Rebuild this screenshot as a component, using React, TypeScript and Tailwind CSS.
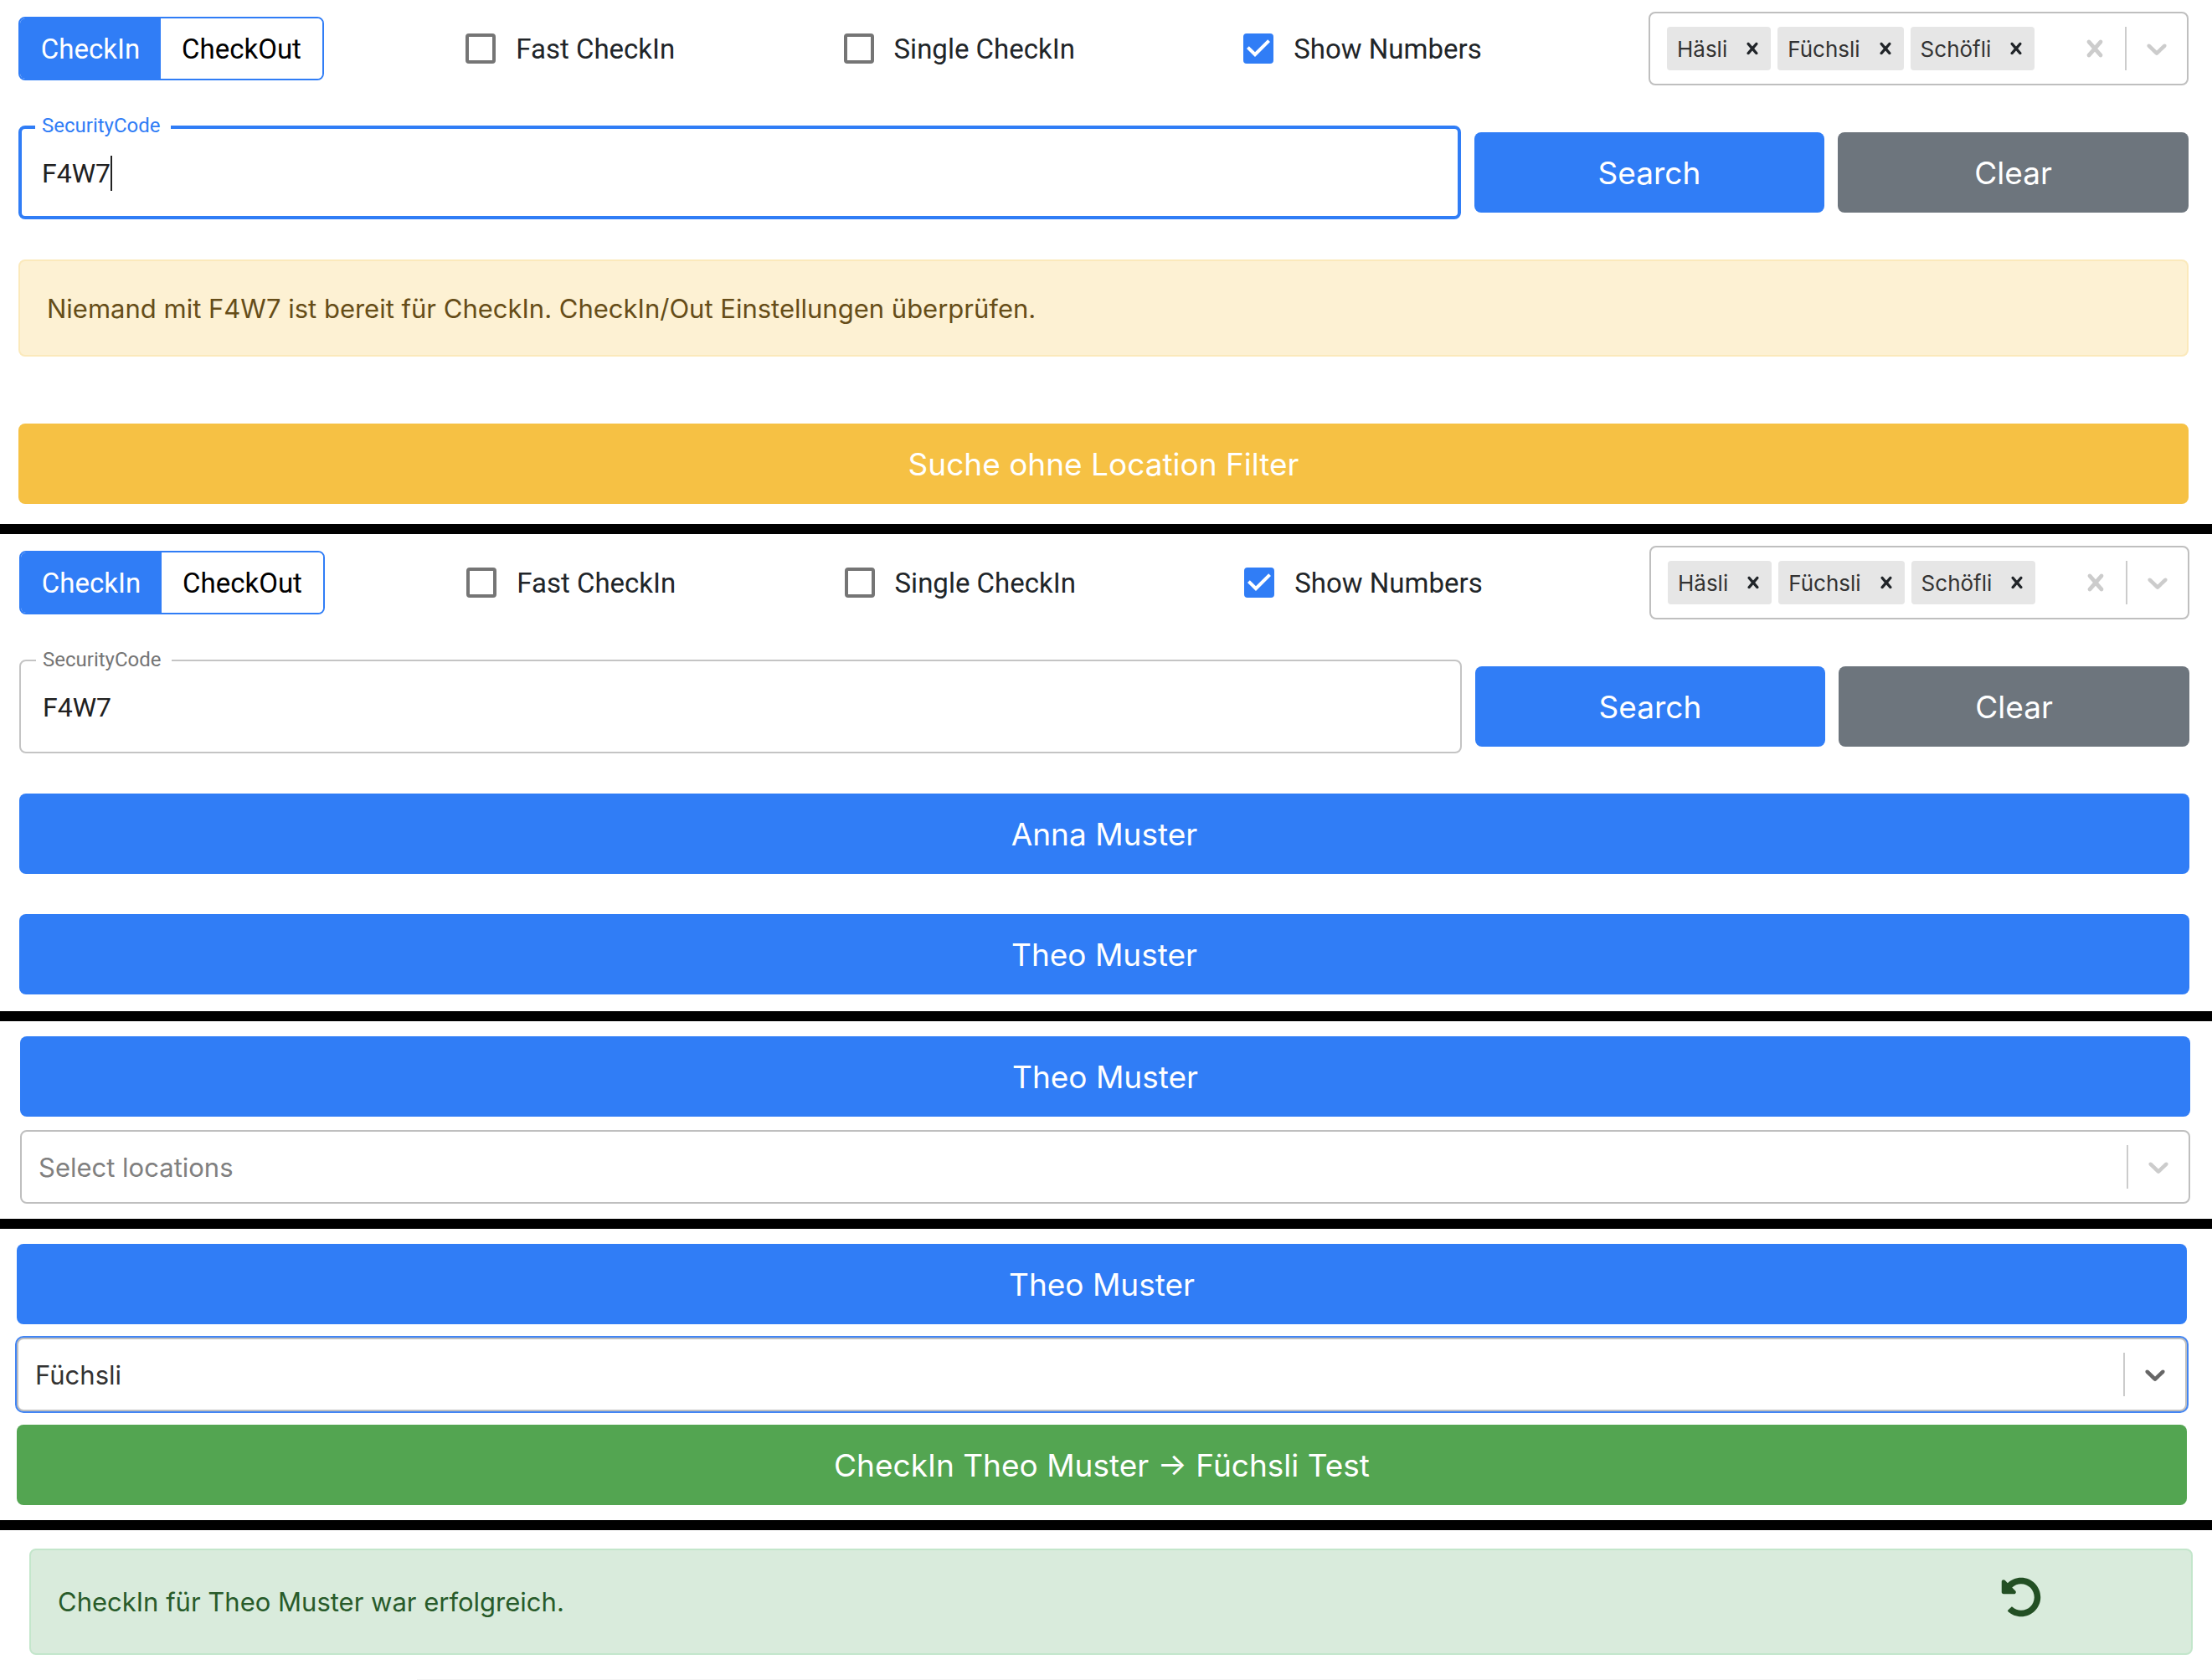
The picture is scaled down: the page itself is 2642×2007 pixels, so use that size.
import { useId, useState, type ReactNode } from "react";
import { FaUndoAlt } from "react-icons/fa";

const sans = "font-['Inter','Liberation_Sans',sans-serif]";
const roboto = "font-['Roboto','Liberation_Sans',sans-serif]";

const tones = {
  blue: "bg-[#307df6]",
  gray: "bg-[#6d757d]",
  yellow: "bg-[#f6c144]",
  green: "bg-[#53a551]",
};

function BigButton({ tone, children }: { tone: keyof typeof tones; children: ReactNode }) {
  return (
    <button
      type="button"
      className={`${sans} ${tones[tone]} flex h-24 w-full items-center justify-center rounded-lg pt-0.5 text-[37px] leading-[60px] text-white`}
    >
      {children}
    </button>
  );
}

function Cross({ className }: { className: string }) {
  return (
    <svg viewBox="0 0 20 20" fill="currentColor" className={className} aria-hidden="true">
      <path d="M14.348 14.849c-0.469 0.469-1.229 0.469-1.697 0l-2.651-3.030-2.651 3.029c-0.469 0.469-1.229 0.469-1.697 0-0.469-0.469-0.469-1.229 0-1.697l2.758-3.15-2.759-3.152c-0.469-0.469-0.469-1.228 0-1.697s1.228-0.469 1.697 0l2.652 3.031 2.651-3.031c0.469-0.469 1.228-0.469 1.697 0s0.469 1.229 0 1.697l-2.758 3.152 2.758 3.15c0.469 0.469 0.469 1.229 0 1.698z" />
    </svg>
  );
}

function Chevron() {
  return (
    <svg viewBox="0 0 20 20" fill="currentColor" className="size-10" aria-hidden="true">
      <path d="M4.516 7.548c0.436-0.446 1.043-0.481 1.576 0l3.908 3.747 3.908-3.747c0.533-0.481 1.141-0.446 1.574 0 0.436 0.445 0.408 1.197 0 1.615-0.406 0.418-4.695 4.502-4.695 4.502-0.217 0.223-0.502 0.335-0.787 0.335s-0.57-0.112-0.789-0.335c0 0-4.287-4.084-4.695-4.502s-0.436-1.17 0-1.615z" />
    </svg>
  );
}

function OpenButton({ active }: { active?: boolean }) {
  return (
    <>
      <span className="h-[52px] w-0.5 bg-[#cccccc]" />
      <button type="button" aria-label="Open menu" className={`p-4 ${active ? "text-[#666666]" : "text-[#cccccc]"}`}>
        <Chevron />
      </button>
    </>
  );
}

function LocationTags() {
  return (
    <div className="flex h-[88px] w-[645px] items-center rounded-lg border-2 border-[#bfbfbf] bg-white pl-5">
      <div className="flex flex-1 gap-2">
        {["Häsli", "Füchsli", "Schöfli"].map((name) => (
          <div key={name} className="flex h-[52px] items-center rounded bg-[#e6e6e6] pl-3 text-[#333333]">
            <span className={`${sans} pt-0.5 text-[26px] leading-8`}>{name}</span>
            <button type="button" aria-label={`Remove ${name}`} className="ml-2 px-2 text-[#212529]">
              <Cross className="size-7" />
            </button>
          </div>
        ))}
      </div>
      <button type="button" aria-label="Clear all" className="p-4 text-[#cccccc]">
        <Cross className="size-10" />
      </button>
      <OpenButton />
    </div>
  );
}

function LocationSelect({ value, active }: { value?: string; active?: boolean }) {
  return (
    <div
      className={`flex h-[88px] w-full items-center rounded-lg border-2 border-[#bfbfbf] bg-white pl-5 ${active ? "ring-2 ring-[#4285f4]" : ""}`}
    >
      <input
        type="text"
        aria-label="Locations"
        defaultValue={value}
        placeholder="Select locations"
        className={`${sans} min-w-0 flex-1 bg-transparent pt-0.5 text-[31px] leading-10 text-[#333333] outline-none placeholder:text-[#808080]`}
      />
      <OpenButton active={active} />
    </div>
  );
}

function Check({ label, initial = false }: { label: string; initial?: boolean }) {
  const [checked, setChecked] = useState(initial);
  return (
    <label className="-ml-[22px] mr-8 flex items-center">
      <span className="relative m-6 size-9">
        <input
          type="checkbox"
          checked={checked}
          onChange={(e) => setChecked(e.target.checked)}
          className="block size-9 appearance-none rounded border-4 border-[#757575] checked:border-[#307df6] checked:bg-[#307df6]"
        />
        {checked && (
          <svg viewBox="3 3 18 18" className="pointer-events-none absolute inset-0 size-9" aria-hidden="true">
            <path d="M10 17l-5-5 1.41-1.41L10 14.17l7.59-7.59L19 8l-9 9z" fill="#fff" />
          </svg>
        )}
      </span>
      <span className={`${roboto} pt-0.5 text-[33px] leading-12 text-[#212529]`}>{label}</span>
    </label>
  );
}

function Toolbar() {
  return (
    <div className="flex h-[88px] items-center justify-between">
      <div className={`${roboto} flex h-[76px] overflow-hidden rounded-lg border-2 border-[#307df6] text-[33px] leading-12`}>
        <button type="button" className="w-[168px] bg-[#307df6] pt-0.5 text-white">
          CheckIn
        </button>
        <button type="button" className="w-[193px] bg-white pt-0.5 text-black">
          CheckOut
        </button>
      </div>
      <Check label="Fast CheckIn" />
      <Check label="Single CheckIn" />
      <Check label="Show Numbers" initial />
      <LocationTags />
    </div>
  );
}

function SearchRow({ focused }: { focused?: boolean }) {
  const id = useId();
  return (
    <div className="mt-12 grid grid-cols-6 items-center gap-4">
      <div className="relative col-span-4">
        <input
          id={id}
          type="text"
          defaultValue="F4W7"
          className={`${roboto} block h-28 w-full rounded-lg pt-0.5 text-[32px] text-[#212121] outline-none ${
            focused ? "border-4 border-[#307df6] px-6" : "border-2 border-[#c4c4c4] px-[26px]"
          }`}
        />
        <label
          htmlFor={id}
          className={`${roboto} absolute -top-3 left-5 bg-white pr-3 pl-2 text-2xl leading-6 ${
            focused ? "text-[#307df6]" : "text-[#757575]"
          }`}
        >
          SecurityCode
        </label>
        {focused && <span className="absolute top-9 left-[110px] h-[42px] w-0.5 bg-[#212121]" />}
      </div>
      <BigButton tone="blue">Search</BigButton>
      <BigButton tone="gray">Clear</BigButton>
    </div>
  );
}

export default function App() {
  return (
    <main className="min-h-screen bg-white">
      <section className="border-b-12 border-black pt-3.5 pr-7 pb-6 pl-[22px]">
        <Toolbar />
        <SearchRow focused />
        <div
          role="alert"
          className={`${sans} mt-12 mb-20 flex h-[116px] items-center rounded-lg border-2 border-[#fbe9bb] bg-[#fdf1d3] px-8 pt-0.5 text-[31px] leading-12 text-[#664d18]`}
        >
          Niemand mit F4W7 ist bereit für CheckIn. CheckIn/Out Einstellungen überprüfen.
        </div>
        <BigButton tone="yellow">Suche ohne Location Filter</BigButton>
      </section>

      <section className="border-b-12 border-black pt-3.5 pr-[27px] pb-5 pl-[23px]">
        <Toolbar />
        <SearchRow />
        <div className="mt-12 flex flex-col gap-12">
          <BigButton tone="blue">Anna Muster</BigButton>
          <BigButton tone="blue">Theo Muster</BigButton>
        </div>
      </section>

      <section className="flex flex-col gap-4 border-b-12 border-black pt-[18px] pr-[26px] pb-[18px] pl-6">
        <BigButton tone="blue">Theo Muster</BigButton>
        <LocationSelect />
      </section>

      <section className="flex flex-col gap-4 border-b-12 border-black pt-[18px] pr-[30px] pb-[18px] pl-5">
        <BigButton tone="blue">Theo Muster</BigButton>
        <LocationSelect value="Füchsli" active />
        <BigButton tone="green">CheckIn Theo Muster → Füchsli Test</BigButton>
      </section>

      <section className="pt-[22px] pr-[23px] pl-[35px]">
        <div
          role="status"
          className={`${sans} flex h-[127px] items-center justify-between rounded-lg border-2 border-[#c3e6cb] bg-[#d9ebdc] pr-[179px] pl-8 text-[31px] leading-12 text-[#285b2a]`}
        >
          CheckIn für Theo Muster war erfolgreich.
          <button type="button" aria-label="Undo" className="pb-3 text-[#234f24]">
            <FaUndoAlt className="size-12" />
          </button>
        </div>
      </section>
      <hr className="mt-[29px] ml-[498px] border-t border-[#f3f3f3]" />
    </main>
  );
}
